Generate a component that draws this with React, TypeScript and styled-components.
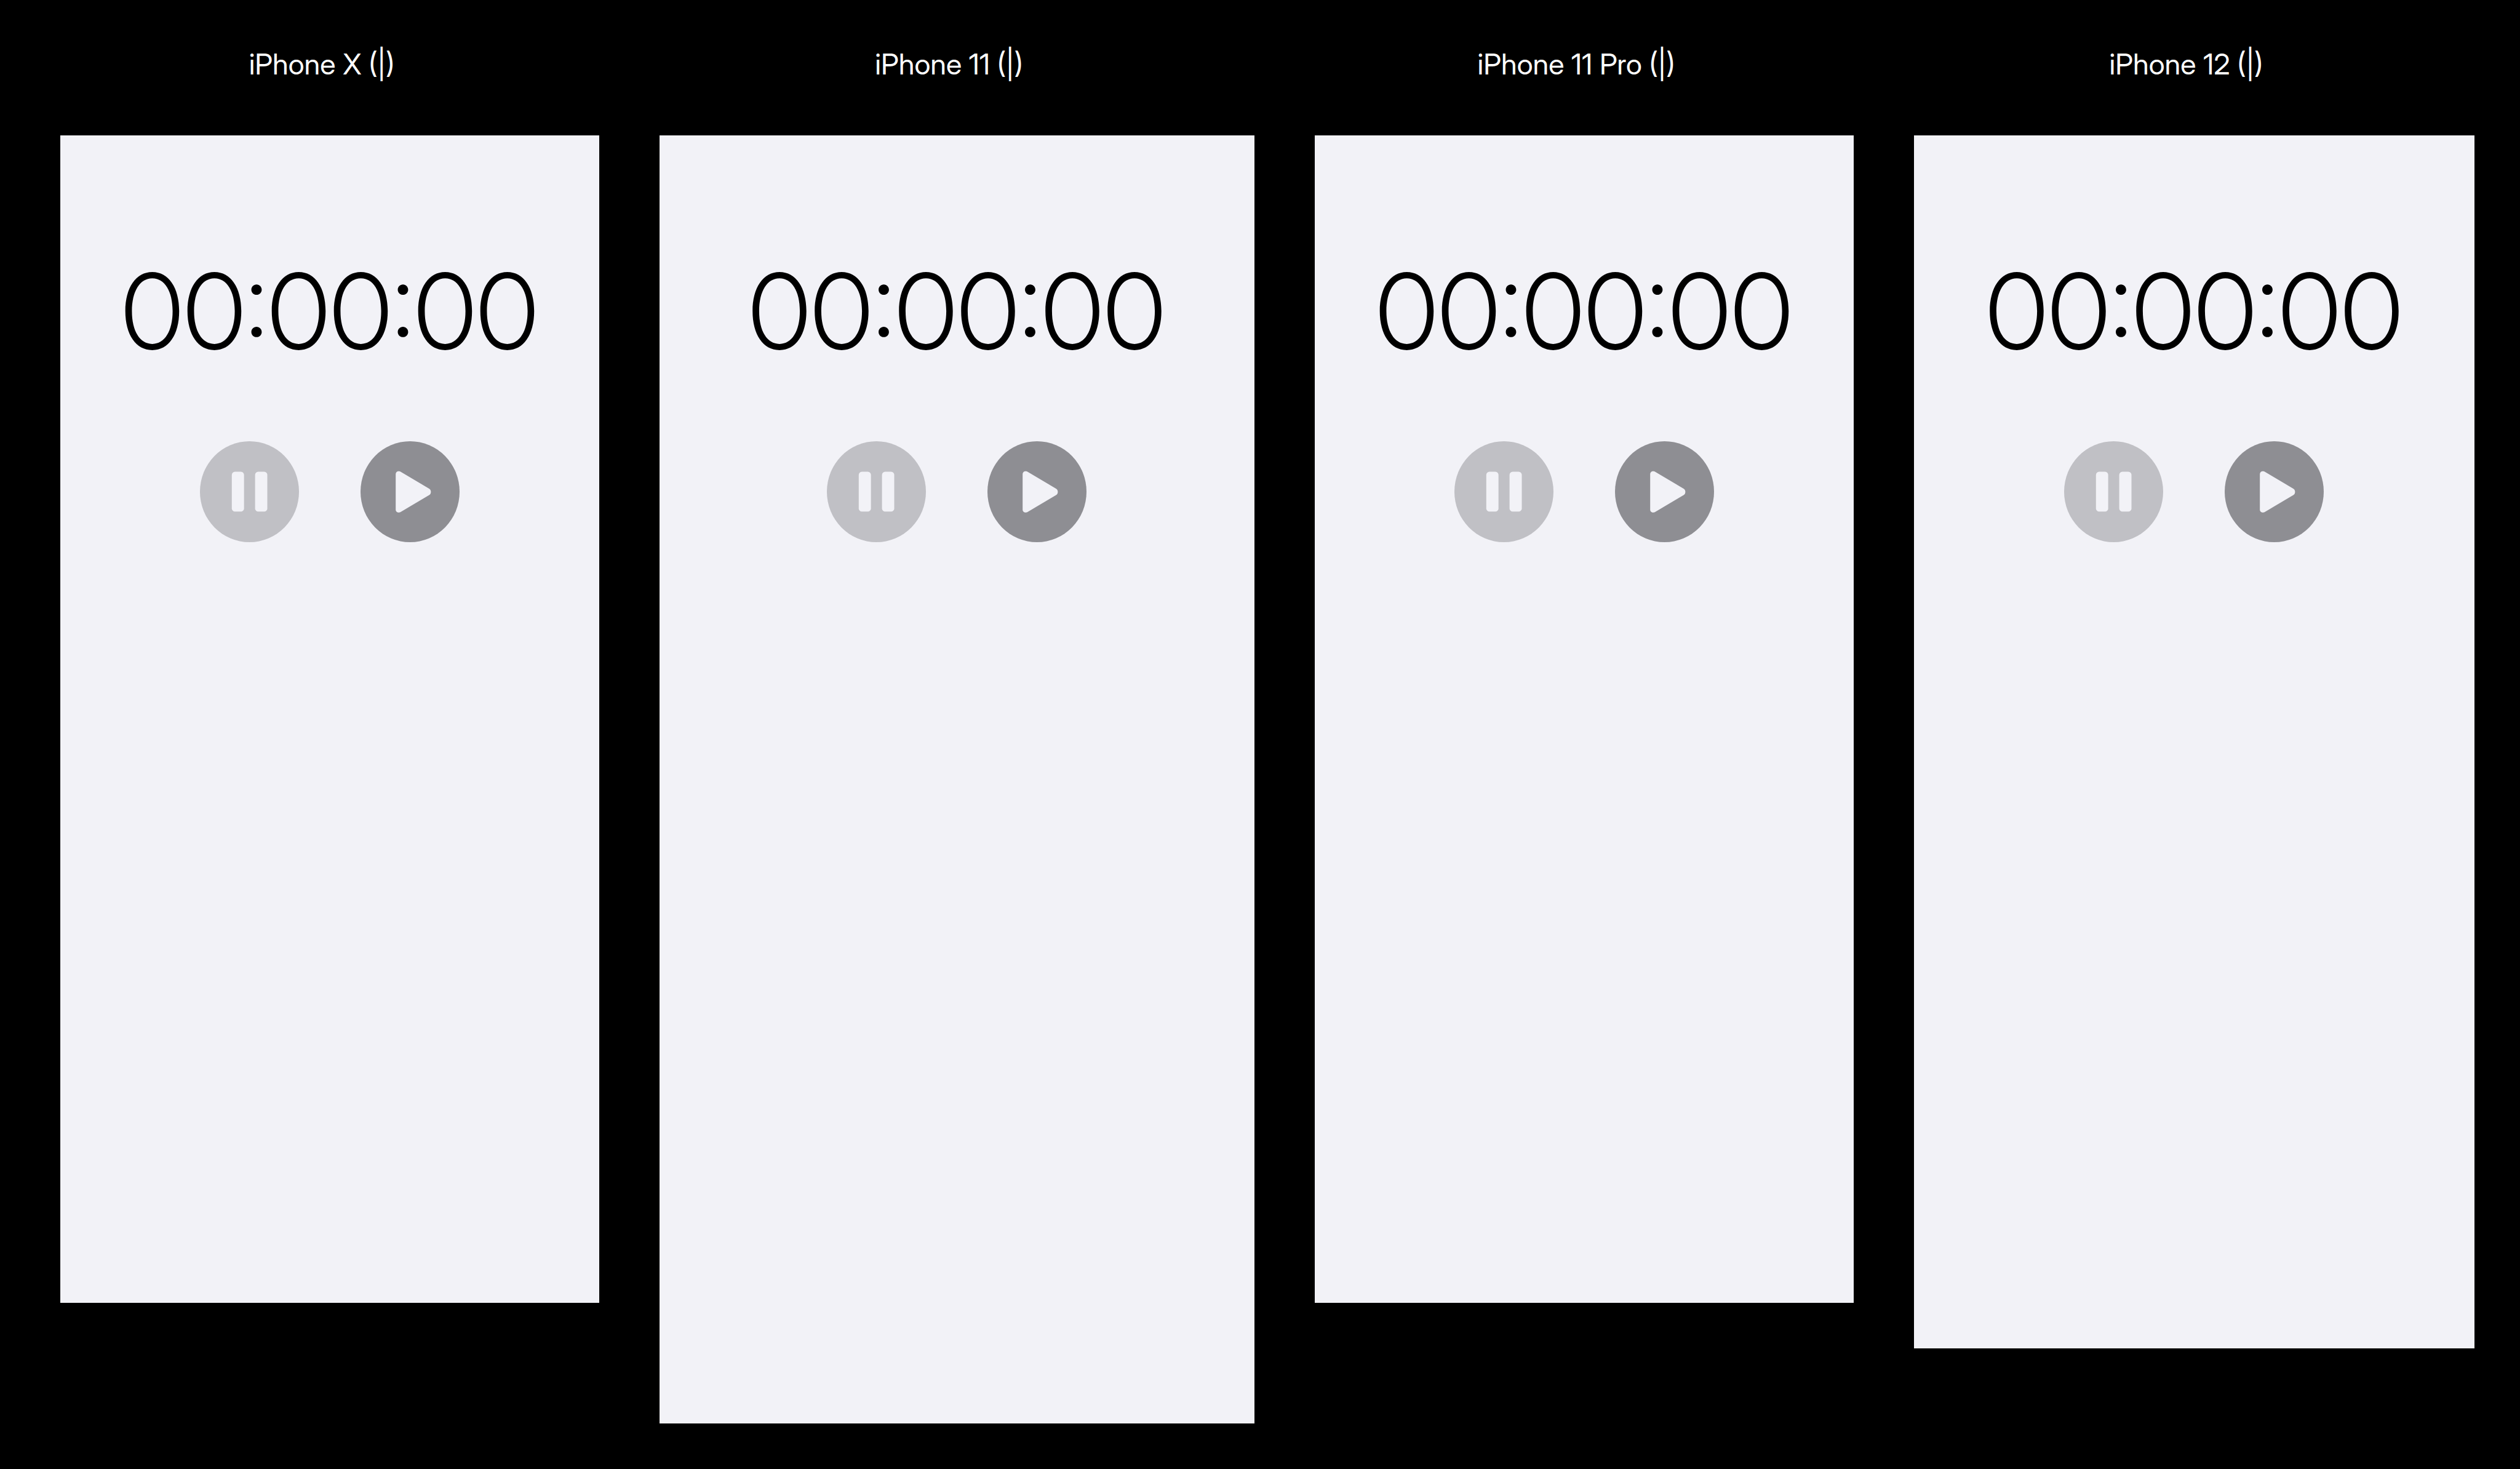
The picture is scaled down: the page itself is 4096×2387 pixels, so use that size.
import React from "react";
import styled, { createGlobalStyle } from "styled-components";

const GlobalStyle = createGlobalStyle`
  *, *::before, *::after { box-sizing: border-box; }
  body {
    margin: 0;
    background: #000000;
    font-family: "Inter Display", Inter, Roboto, "Liberation Sans", sans-serif;
  }
`;

const Gallery = styled.main`
  display: grid;
  grid-template-columns: 375fr 414fr 375fr 390fr;
  align-items: start;
  gap: 98px;
  padding: 74px 74px 74px 98px;
`;

const Device = styled.section`
  display: flex;
  flex-direction: column;
  gap: 86px;
  min-width: 0;
`;

const DeviceName = styled.h2`
  margin: 0;
  padding-right: 26px;
  color: #ffffff;
  font-size: 47px;
  font-weight: 400;
  line-height: 60px;
  text-align: center;
  white-space: nowrap;
`;

const Screen = styled.div<{ $ratio: string }>`
  display: flex;
  flex-direction: column;
  align-items: center;
  gap: 112px;
  padding-top: 185px;
  aspect-ratio: ${(p) => p.$ratio};
  background: #f2f2f7;
`;

const Time = styled.time`
  color: #000000;
  font-size: 170px;
  font-weight: 300;
  line-height: 200px;
  white-space: nowrap;
`;

const Controls = styled.div`
  display: flex;
  gap: 100px;
`;

const RoundButton = styled.button`
  display: block;
  padding: 0;
  border: 0;
  border-radius: 50%;
  background: none;
  color: #8e8e93;
  cursor: pointer;

  &:disabled {
    color: #c0c0c5;
    cursor: default;
  }
`;

const Glyph = styled.svg`
  display: block;
  width: 161px;
  height: 164px;
`;

function PauseGlyph() {
  return (
    <Glyph viewBox="0 0 207 211" preserveAspectRatio="none" aria-hidden="true">
      <ellipse cx="103.5" cy="105.5" rx="103.5" ry="105.5" fill="currentColor" />
      <rect x="66.6" y="63.7" width="25.5" height="83.3" rx="6.6" fill="#f2f2f7" />
      <rect x="115.2" y="63.7" width="25.6" height="83.3" rx="6.6" fill="#f2f2f7" />
    </Glyph>
  );
}

function PlayGlyph() {
  return (
    <Glyph viewBox="0 0 207 211" preserveAspectRatio="none" aria-hidden="true">
      <ellipse cx="103.5" cy="105.5" rx="103.5" ry="105.5" fill="currentColor" />
      <path
        d="M73.5 69.2C73.5 65 76.2 62.6 79.8 62.6C81.6 62.6 83.1 63.3 84.8 64.3L143.3 99C145.9 100.6 147 102.9 147 105.8C147 108.7 145.9 111 143.3 112.6L84.8 147.4C83.1 148.4 81.6 149 79.8 149C76.2 149 73.5 146.6 73.5 142.4Z"
        fill="#f2f2f7"
      />
    </Glyph>
  );
}

const devices = [
  { name: "iPhone X", ratio: "375 / 812" },
  { name: "iPhone 11", ratio: "414 / 896" },
  { name: "iPhone 11 Pro", ratio: "375 / 812" },
  { name: "iPhone 12", ratio: "390 / 844" },
];

function Stopwatch({ ratio }: { ratio: string }) {
  return (
    <Screen $ratio={ratio}>
      <Time>00:00:00</Time>
      <Controls>
        <RoundButton type="button" aria-label="Pause" disabled>
          <PauseGlyph />
        </RoundButton>
        <RoundButton type="button" aria-label="Play">
          <PlayGlyph />
        </RoundButton>
      </Controls>
    </Screen>
  );
}

export default function App() {
  return (
    <>
      <GlobalStyle />
      <Gallery>
        {devices.map((device) => (
          <Device key={device.name}>
            <DeviceName>{device.name} (|)</DeviceName>
            <Stopwatch ratio={device.ratio} />
          </Device>
        ))}
      </Gallery>
    </>
  );
}
